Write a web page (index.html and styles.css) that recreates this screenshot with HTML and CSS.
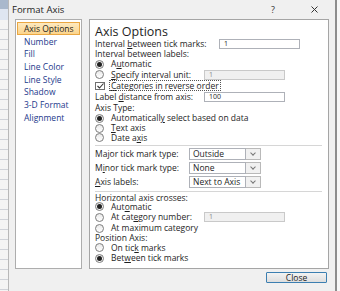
FILE: index.html
```html
<!DOCTYPE html>
<html lang="en">
<head>
    <meta charset="UTF-8">
    <title>Format Axis</title>
    <link rel="stylesheet" href="styles.css">
</head>
<body>
    <div class="sheet"></div>
    <div class="dialog">
        <div class="titlebar">
            <span class="title">Format Axis</span>
            <span class="help">?</span>
            <svg class="close-x" width="7" height="7" viewBox="0 0 7 7">
                <path d="M0.5 0.5 L6.5 6.5 M6.5 0.5 L0.5 6.5" stroke="#333" stroke-width="1"/>
            </svg>
        </div>

        <div class="main">
            <ul class="nav">
                <li class="active">Axis Options</li>
                <li>Number</li>
                <li>Fill</li>
                <li>Line Color</li>
                <li>Line Style</li>
                <li>Shadow</li>
                <li>3-D Format</li>
                <li>Alignment</li>
            </ul>

            <div class="pane">
                <h1>Axis Options</h1>

                <div class="row h11">
                    <span class="label w-tick">Interval <u>b</u>etween tick marks:</span>
                    <span class="field">1</span>
                </div>
                <div class="row h10"><span>Interval between labels:</span></div>
                <div class="row h10"><span class="radio on"></span><span>A<u>u</u>tomatic</span></div>
                <div class="row h11">
                    <span class="radio"></span>
                    <span class="label w-radio"><u>S</u>pecify interval unit:</span>
                    <span class="field disabled">1</span>
                </div>
                <div class="row h11">
                    <span class="check">
                        <svg width="7" height="6" viewBox="0 0 7 6"><path d="M0.5 3 L2.5 5 L6.5 0.5" fill="none" stroke="#333" stroke-width="1.1"/></svg>
                    </span>
                    <span class="focus"><u>C</u>ategories in reverse order</span>
                </div>
                <div class="row h11">
                    <span class="label w-plain">Label <u>d</u>istance from axis:</span>
                    <span class="field">100</span>
                </div>
                <div class="row h11"><span>Axis Type:</span></div>
                <div class="row h10"><span class="radio on"></span><span>Automaticall<u>y</u> select based on data</span></div>
                <div class="row h10"><span class="radio"></span><span><u>T</u>ext axis</span></div>
                <div class="row h9"><span class="radio"></span><span>Date a<u>x</u>is</span></div>

                <div class="sep"></div>

                <div class="row h12">
                    <span class="label w-drop">Ma<u>j</u>or tick mark type:</span>
                    <span class="select"><span class="value">Outside</span><span class="arrow"></span></span>
                </div>
                <div class="row h12 gap2">
                    <span class="label w-drop">M<u>i</u>nor tick mark type:</span>
                    <span class="select"><span class="value">None</span><span class="arrow"></span></span>
                </div>
                <div class="row h12 gap2">
                    <span class="label w-drop"><u>A</u>xis labels:</span>
                    <span class="select"><span class="value">Next to Axis</span><span class="arrow"></span></span>
                </div>

                <div class="sep"></div>

                <div class="row h8"><span>Horizontal axis crosses:</span></div>
                <div class="row h9"><span class="radio on"></span><span>Aut<u>o</u>matic</span></div>
                <div class="row h12">
                    <span class="radio"></span>
                    <span class="label w-radio">At cat<u>e</u>gory number:</span>
                    <span class="field disabled">1</span>
                </div>
                <div class="row h10"><span class="radio"></span><span>At maximum category</span></div>
                <div class="row h10"><span>Position Axis:</span></div>
                <div class="row h9"><span class="radio"></span><span>On tic<u>k</u> marks</span></div>
                <div class="row h12"><span class="radio on"></span><span>Bet<u>w</u>een tick marks</span></div>
            </div>
        </div>

        <div class="footer">
            <button class="button">Close</button>
        </div>
    </div>
    <div class="edge"></div>
</body>
</html>
```

FILE: styles.css
```css
* {
    box-sizing: border-box;
}

body {
    margin: 0;
    width: 340px;
    height: 291px;
    overflow: hidden;
    display: flex;
    background: #fff;
    font-family: "Open Sans", "DejaVu Sans", sans-serif;
    font-size: 8.5px;
    color: #1e1e1e;
}

u {
    text-decoration-thickness: 1px;
    text-underline-offset: 1px;
}

/* spreadsheet sliver behind the dialog */
.sheet {
    width: 9px;
    flex: none;
    border-right: 1px solid #b8b8b8;
    background:
        linear-gradient(to bottom, #a9b8cc 0 9px, #dfe6f1 9px 20px, transparent 20px),
        repeating-linear-gradient(to bottom, #f4f4f4 0 9px, #cfd2d8 9px 10px);
}

.edge {
    flex: 1;
    border-left: 2px solid #8d8d8d;
    background: #f7f7f7;
}

.dialog {
    width: 326px;
    flex: none;
    display: flex;
    flex-direction: column;
    background: #f0f0f0;
}

.titlebar {
    height: 19px;
    display: flex;
    align-items: center;
    padding: 0 0 0 3px;
}

.title {
    font-size: 9.5px;
    color: #222;
}

.help {
    margin-left: auto;
    margin-right: 36px;
    font-size: 9px;
    color: #333;
}

.close-x {
    margin-right: 17px;
}

.main {
    height: 250px;
    display: flex;
    gap: 7px;
    padding-left: 6px;
}

.nav {
    width: 67px;
    margin: 0;
    padding: 2px 1px 0;
    list-style: none;
    background: #fff;
    border: 1px solid #adadad;
}

.nav li {
    height: 12.7px;
    line-height: 11px;
    padding-left: 6px;
    color: #23398c;
    border: 1px solid transparent;
}

.nav li.active {
    color: #1e1e1e;
    background: linear-gradient(#fde9bf, #fbd48c);
    border-color: #eaa742;
}

.pane {
    width: 240px;
    padding: 6px 6px 0 5px;
    background: #fff;
    border: 1px solid #a5a5a5;
}

h1 {
    margin: 0;
    height: 12px;
    line-height: 12px;
    font-size: 12.5px;
    font-weight: normal;
    color: #1e1e1e;
}

.row {
    display: flex;
    align-items: center;
    white-space: nowrap;
    line-height: 8px;
}

.h8  { height: 8px; }
.h9  { height: 9px; }
.h10 { height: 10px; }
.h11 { height: 11px; }
.h12 { height: 12px; }

.gap2 {
    margin-top: 2px;
}

.label {
    flex: none;
}

.w-tick  { width: 124px; }
.w-plain { width: 109px; }
.w-radio { width: 93px; }
.w-drop  { width: 94px; }

.field {
    width: 81px;
    height: 10px;
    line-height: 8px;
    padding-left: 4px;
    font-size: 7px;
    background: #fff;
    border: 1px solid #aeb1b8;
}

.field.disabled {
    background: #f0f0f0;
    border-color: #c9c9c9;
    color: #8a8a8a;
}

.radio {
    width: 9px;
    height: 9px;
    flex: none;
    margin-right: 7px;
    border: 1px solid #7d7d7d;
    border-radius: 50%;
    background: linear-gradient(#e9e9e9, #fff);
    display: flex;
    align-items: center;
    justify-content: center;
}

.radio.on::after {
    content: "";
    width: 5px;
    height: 5px;
    border-radius: 50%;
    background: #222;
}

.check {
    width: 10px;
    height: 8px;
    flex: none;
    margin-right: 5px;
    border: 1px solid #6f6f6f;
    background: #fff;
    display: flex;
    align-items: center;
    justify-content: center;
}

.focus {
    padding: 0 1px;
    outline: 1px dotted #555;
    line-height: 9px;
}

.sep {
    height: 1px;
    margin: 3px 0 2px;
    background: #d6d6d6;
}

.select {
    display: flex;
    height: 12px;
}

.select .value {
    width: 57px;
    line-height: 10px;
    padding-left: 3px;
    border: 1px solid #aeb1b8;
    background: #fff;
}

.select .arrow {
    width: 15px;
    border: 1px solid #b9b9b9;
    border-left: none;
    background: #f1f1f1;
    display: flex;
    align-items: center;
    justify-content: center;
}

.select .arrow::after {
    content: "";
    width: 3px;
    height: 3px;
    margin-top: -2px;
    border-right: 1px solid #777;
    border-bottom: 1px solid #777;
    transform: rotate(45deg);
}

.footer {
    display: flex;
    justify-content: flex-end;
    padding: 3px 8px 0 0;
}

.button {
    width: 61px;
    height: 11px;
    padding: 0;
    font-family: inherit;
    font-size: 8.5px;
    line-height: 9px;
    color: #222;
    background: linear-gradient(#f3f3f3, #dedede);
    border: 1px solid #3c7fb1;
    border-radius: 1px;
}
```
